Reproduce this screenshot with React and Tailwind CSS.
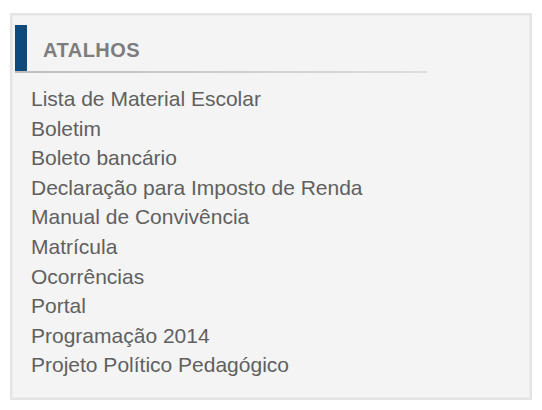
const links = [
  "Lista de Material Escolar",
  "Boletim",
  "Boleto bancário",
  "Declaração para Imposto de Renda",
  "Manual de Convivência",
  "Matrícula",
  "Ocorrências",
  "Portal",
  "Programação 2014",
  "Projeto Político Pedagógico",
];

export default function App() {
  return (
    <div
      className="min-h-screen bg-white pl-[10px] pt-[13px]"
      style={{ fontFamily: '"Liberation Sans", Arial, sans-serif' }}
    >
      <div className="h-[387px] w-[522px] border-2 border-[#e4e4e4] bg-[#f4f4f4] shadow-[inset_0_0_0_1px_#ececec]">
        <div className="ml-[3px] mt-[10px] w-[412px]">
          <div className="flex h-[46px]">
            <div className="w-[12px] bg-[#0e4a7c]" />
            <h2 className="pl-[16px] pt-[4px] text-[20px] font-bold leading-[42px] tracking-[0.5px] text-[#7d7d7d]">
              ATALHOS
            </h2>
          </div>
          <div className="h-[2px] w-full bg-gradient-to-r from-[#bdbdbd] to-[#dedede]" />
        </div>

        <ul className="mt-[11px] pl-[19px]">
          {links.map((label) => (
            <li key={label}>
              <a href="#" className="text-[21px] leading-[29.6px] text-[#606060]">
                {label}
              </a>
            </li>
          ))}
        </ul>
      </div>
    </div>
  );
}
